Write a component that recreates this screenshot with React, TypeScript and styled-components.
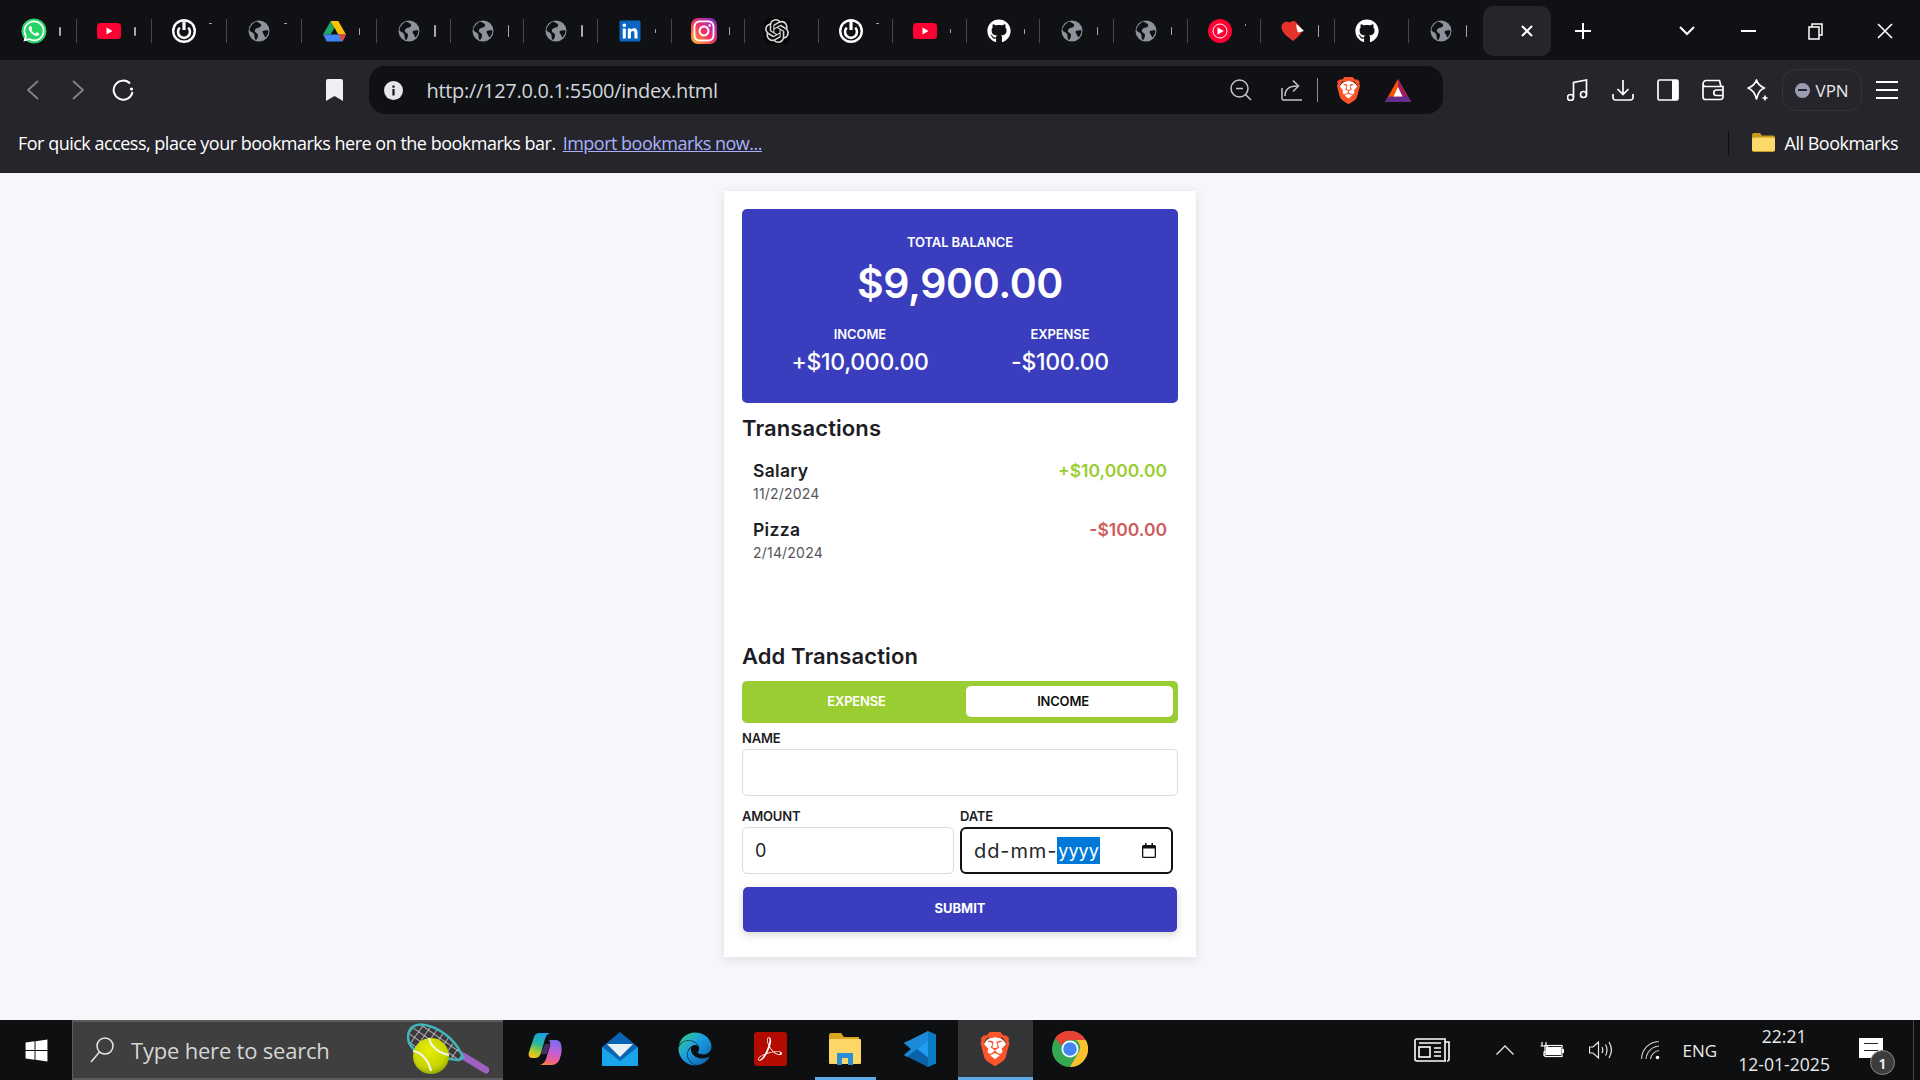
import { FC, ReactNode } from "react";
import styled, { createGlobalStyle } from "styled-components";
import { FaEdge, FaGithub, FaInstagram, FaLinkedin, FaWhatsapp, FaWindows } from "react-icons/fa";
import { SiBrave, SiOpenai, SiAdobeacrobatreader } from "react-icons/si";

const UI_FONT = `"Open Sans", "Noto Sans", sans-serif`;
const APP_FONT = `Inter, "Open Sans", sans-serif`;

const GlobalStyle = createGlobalStyle`
  html, body { margin: 0; padding: 0; }
  body { font-family: ${APP_FONT}; overflow: hidden; }
  * { box-sizing: border-box; }
`;

/* ---------- drawn icons ---------- */

const PowerIcon = () => (
  <svg width="24" height="24" viewBox="0 0 24 24">
    <circle cx="12" cy="12" r="12" fill="#fff" />
    <circle cx="12" cy="12" r="9.6" fill="#101114" />
    <path d="M7.8 8.6a6 6 0 1 0 8.4 0" fill="none" stroke="#fff" strokeWidth="2.6" />
    <path d="M12 2v9" stroke="#fff" strokeWidth="3.2" />
  </svg>
);

const GlobeIcon = () => (
  <svg width="22" height="22" viewBox="0 0 22 22">
    <circle cx="11" cy="11" r="10.5" fill="#8e929a" />
    <path
      d="M8 1.500c3 1.500 6 2 5 4.500s-5 1-6 4 3 2.500 3 5-1 4-2 5c-2-1-1-4-2-6S2 12 1.500 10 5 3 8 1.500zM15 11c2-1 4-1 5.500-.5 0 2-1 5-3 7-1-1-1-2-2-3.500s-1.500-2.500-.5-3z"
      fill="#101114"
    />
  </svg>
);

const YoutubeIcon = () => (
  <svg width="24" height="16" viewBox="0 0 24 16">
    <rect width="24" height="16" rx="3.500" fill="#ff0033" />
    <path d="M9.500 4.500 15.500 8l-6 3.500z" fill="#fff" />
  </svg>
);

const DriveIcon = () => (
  <svg width="23" height="21" viewBox="0 0 23 21">
    <path d="M7.700 0h7.600l-7.600 13.500H0z" fill="#1fa463" />
    <path d="M7.700 0h7.600L23 13.500h-7.700z" fill="#ffc107" />
    <path d="M0 13.500h23L19.500 20.500H3.800z" fill="#4285f4" />
    <path d="M15.300 13.500H23L19.500 20.500z" fill="#ea4335" />
  </svg>
);

const YtMusicIcon = () => (
  <svg width="24" height="24" viewBox="0 0 24 24">
    <circle cx="12" cy="12" r="12" fill="#ff0033" />
    <circle cx="12" cy="12" r="7" fill="none" stroke="#fff" strokeWidth="1" />
    <path d="M9.500 8.200 15.800 12l-6.300 3.800z" fill="#fff" />
  </svg>
);

const HeartNoteIcon = () => (
  <svg width="24" height="22" viewBox="0 0 24 22">
    <path d="M12 21C6 16.500 0 12 .5 6.500 1 2 6 .5 8.500 2.500 10 1 13 0 15 2l7 8c-2.500 5-6 8-10 11z" fill="#e5322d" />
    <path d="M15.500 4l7.500 7-6 1.500c-1-2.500-2-6-1.500-8.500z" fill="#fff" />
  </svg>
);

const BatIcon = () => (
  <svg width="26" height="23" viewBox="0 0 26 23">
    <path d="M13 0 26 23H0z" fill="#ff5000" />
    <path d="M13 0 26 23H18.500L13 8z" fill="#9e1f63" />
    <path d="M0 23l3.500-5.500h19L26 23z" fill="#662d91" />
    <path d="M13 8l4.500 9.500h-9z" fill="#fff" />
  </svg>
);

const LineSvg = styled.svg`
  width: 22px;
  height: 22px;
  stroke: #fff;
  stroke-width: 1.7;
`;

const GraySvg = styled.svg`
  width: 22px;
  height: 22px;
  stroke: #c4c6cb;
  stroke-width: 1.5;
`;

const MusicIcon = () => (
  <LineSvg viewBox="0 0 22 22" fill="none">
    <circle cx="3.500" cy="18.500" r="3" />
    <circle cx="16.500" cy="15.500" r="3" />
    <path d="M6.500 18V3.500L19.500 1v14.500" />
  </LineSvg>
);

const DownloadIcon = () => (
  <LineSvg viewBox="0 0 22 22" fill="none">
    <path d="M11 1v14M5.500 10l5.500 5.500L16.500 10M1 15v3.500a2.500 2.500 0 0 0 2.500 2.500h15a2.500 2.500 0 0 0 2.500-2.500V15" />
  </LineSvg>
);

const SidebarIcon = () => (
  <LineSvg viewBox="0 0 22 22" fill="none">
    <rect x="1" y="1" width="20" height="20" rx="1.500" />
    <rect x="15" y="1" width="6" height="20" fill="#fff" stroke="none" />
  </LineSvg>
);

const WalletIcon = () => (
  <LineSvg viewBox="0 0 22 22" fill="none">
    <path d="M1 5.500V18a2.500 2.500 0 0 0 2.500 2.500h15A2.500 2.500 0 0 0 21 18V7.500H3.500C2 7.500 1 6.500 1 5c0-2 1.500-3.500 3-3.500h13.500L19 7.500" />
    <path d="M21 11h-6.500a2.500 2.500 0 0 0 0 5.500H21" />
  </LineSvg>
);

const LeoIcon = () => (
  <LineSvg viewBox="0 0 22 22" fill="none">
    <path d="M9.500 1c1 4 3 6 8 8-4 1.500-6 3.500-8 11-1.500-6-3.500-9-8.500-11 5-1.500 7-4 8.500-8z" strokeLinejoin="round" />
    <path d="M18 15.500l1 2.500 2.500 1-2.500 1-1 2.500-1-2.500-2.500-1 2.500-1z" fill="#fff" stroke="none" />
  </LineSvg>
);

const ZoomOutIcon = () => (
  <GraySvg viewBox="0 0 22 22" fill="none">
    <circle cx="9.500" cy="9.500" r="8.500" />
    <path d="M15.500 15.500 21 21M6 9.500h7" />
  </GraySvg>
);

const ShareIcon = () => (
  <GraySvg viewBox="0 0 22 22" fill="none">
    <path d="M1 9v10.500a1.500 1.500 0 0 0 1.500 1.500H21M4 17c0-7 4-10 12-10M12 1.500 17.500 7 12 12.500" />
  </GraySvg>
);

const ReloadIcon = () => (
  <svg width="22" height="22" viewBox="0 0 22 22" fill="none" stroke="#fff" strokeWidth="2">
    <path d="M18 4.500A9.500 9.500 0 1 0 20.500 13" />
    <circle cx="19.500" cy="10" r="1.600" fill="#fff" stroke="none" />
  </svg>
);

const BackIcon: FC<{ $flip?: boolean }> = ({ $flip }) => (
  <svg width="12" height="20" viewBox="0 0 12 20" fill="none" stroke="#85858c" strokeWidth="1.800">
    <path d={$flip ? "M1 1l10 9-10 9" : "M11 1 1 10l10 9"} />
  </svg>
);

const BookmarkIcon = () => (
  <svg width="17" height="22" viewBox="0 0 17 22">
    <path d="M2 0h13a2 2 0 0 1 2 2v20l-8.500-5L0 22V2a2 2 0 0 1 2-2z" fill="#eef0f4" />
  </svg>
);

const InfoIcon = () => (
  <svg width="19" height="19" viewBox="0 0 19 19">
    <circle cx="9.500" cy="9.500" r="9.500" fill="#e6e7ec" />
    <rect x="8.400" y="8" width="2.200" height="6.500" fill="#15161a" />
    <rect x="8.400" y="4.500" width="2.200" height="2.200" fill="#15161a" />
  </svg>
);

const FolderIcon = () => (
  <svg width="23" height="19" viewBox="0 0 23 19">
    <path d="M0 2a2 2 0 0 1 2-2h6l2 2.500h11a2 2 0 0 1 2 2V17a2 2 0 0 1-2 2H2a2 2 0 0 1-2-2z" fill="#c99a1c" />
    <rect y="4.500" width="23" height="13.500" rx="1.500" fill="#fbd96a" />
  </svg>
);

const MenuIcon = () => (
  <svg width="22" height="18" viewBox="0 0 22 18" fill="#fff">
    <rect width="22" height="2" />
    <rect y="8" width="22" height="2" />
    <rect y="16" width="22" height="2" />
  </svg>
);

const CalendarIcon = () => (
  <svg width="14" height="15" viewBox="0 0 14 15">
    <path
      fillRule="evenodd"
      d="M3 0h1.500v2h5V0H11v2h1.500A1.500 1.500 0 0 1 14 3.500v10a1.500 1.500 0 0 1-1.500 1.500h-11A1.500 1.500 0 0 1 0 13.500v-10A1.500 1.500 0 0 1 1.500 2H3zM1.300 5.500v8.200h11.400V5.500z"
      fill="#111"
    />
  </svg>
);

const RacketIcon = () => (
  <svg width="82" height="54" viewBox="0 0 82 54">
    <defs>
      <radialGradient id="ball" cx="45%" cy="35%" r="70%">
        <stop offset="0%" stopColor="#e8f000" />
        <stop offset="70%" stopColor="#c4d200" />
        <stop offset="100%" stopColor="#8a9a00" />
      </radialGradient>
      <pattern id="strings" width="7" height="7" patternUnits="userSpaceOnUse" patternTransform="rotate(35)">
        <rect width="7" height="7" fill="#3a3a3c" />
        <path d="M0 0h7M0 0v7" stroke="#d8d0d4" strokeWidth="1.500" />
      </pattern>
    </defs>
    <path d="M56 33 79 47" stroke="#a060c0" strokeWidth="7" strokeLinecap="round" />
    <path d="M42 22 57 35" stroke="#3fb4bc" strokeWidth="3" />
    <path d="M18 2C8 0 1 5 1 14s8 16 20 19l30 4c4 0 5-3 3-7C46 14 30 4 18 2z" fill="url(#strings)" stroke="#3fb4bc" strokeWidth="2.500" />
    <circle cx="24" cy="33" r="18" fill="url(#ball)" />
    <path d="M6 28c8 1 15 8 18 20M22 15c2 9 10 15 20 17" fill="none" stroke="#f4f4f0" strokeWidth="2.200" />
  </svg>
);

const CopilotIcon = () => (
  <svg width="34" height="32" viewBox="0 0 34 32">
    <defs>
      <linearGradient id="cop1" x1="0.6" y1="0" x2="0.3" y2="1">
        <stop offset="0%" stopColor="#1a9fe8" />
        <stop offset="45%" stopColor="#27b89a" />
        <stop offset="75%" stopColor="#a8cc30" />
        <stop offset="100%" stopColor="#f5c020" />
      </linearGradient>
      <linearGradient id="cop2" x1="0.6" y1="0" x2="0.4" y2="1">
        <stop offset="0%" stopColor="#7a6cf0" />
        <stop offset="50%" stopColor="#c85fd0" />
        <stop offset="85%" stopColor="#f0608a" />
        <stop offset="100%" stopColor="#f78040" />
      </linearGradient>
    </defs>
    <path d="M11 0h11c-3 1-4 3-5 6l-4 14c-1 3-3 5-6 5H4c-3 0-4-3-3-6L6 4c1-3 3-4 5-4z" fill="url(#cop1)" />
    <path d="M21 7h7c2 0 4 1 5 4 1 4 1 9-1 14-1 4-4 7-8 7H12c3-1 5-3 6-6l4-13c.5-2 0-5-1-6z" fill="url(#cop2)" />
    <path d="M17 11h5l-3 10h-6z" fill="#7a4fc0" opacity="0.5" />
  </svg>
);

const MailIcon = () => (
  <svg width="36" height="34" viewBox="0 0 36 34">
    <path d="M18 0 36 15v19H0V15z" fill="#0a64b4" />
    <path d="M5 12h26L18 25z" fill="#e8f0f6" />
    <path d="M0 15l18 14 18-14v19H0z" fill="#1aa5ea" />
  </svg>
);

const ExplorerIcon = () => (
  <svg width="32" height="32" viewBox="0 0 32 32">
    <path d="M0 2a2 2 0 0 1 2-2h10l3 4h15v6H0z" fill="#dba520" />
    <rect y="6" width="32" height="25" rx="1" fill="#fcd768" />
    <path d="M8 32V20h16v12h-5v-7h-6v7z" fill="#2a8fd8" />
  </svg>
);

const VsCodeIcon = () => (
  <svg width="32" height="36" viewBox="0 0 32 36">
    <path d="M24 0l8 3.500v29L24 36 8 21l8-6z" fill="#0a7cc6" />
    <path d="M24 0v36l-16-15 4-3z" fill="#1f9cf0" />
    <path d="M0 12l3-2 21 16.500V36L0 24l7-6z" fill="#0a63a8" />
    <path d="M0 24l3 2L24 9.500V0L0 12l7 6z" fill="#1a8ad8" />
  </svg>
);

const ChromeIcon = () => (
  <svg width="36" height="36" viewBox="0 0 36 36">
    <circle cx="18" cy="18" r="18" fill="#34a853" />
    <path d="M18 0a18 18 0 0 1 15.600 9H18a9 9 0 0 0-8.400 5.800L3 7A18 18 0 0 1 18 0z" fill="#ea4335" />
    <path d="M33.600 9A18 18 0 0 1 18 36l7.800-13.500A9 9 0 0 0 24 9z" fill="#fbc02d" />
    <circle cx="18" cy="18" r="8.500" fill="#fff" />
    <circle cx="18" cy="18" r="6.800" fill="#4285f4" />
  </svg>
);

const NewsIcon = () => (
  <svg width="36" height="24" viewBox="0 0 36 24" fill="none" stroke="#fff" strokeWidth="1.600">
    <path d="M3 1h28v21a1 1 0 0 0 1 1H3a2 2 0 0 1-2-2V3a2 2 0 0 1 2-2zM31 4h4v17a2 2 0 0 1-2 2" />
    <rect x="5" y="9" width="11" height="10" />
    <path d="M5 5h22M20 10h7M20 14h7M20 18h7" />
  </svg>
);

const ChevronUpIcon = () => (
  <svg width="18" height="10" viewBox="0 0 18 10" fill="none" stroke="#e8e8e8" strokeWidth="1.300">
    <path d="M.500 9.500 9 1l8.500 8.500" />
  </svg>
);

const BatteryIcon = () => (
  <svg width="24" height="16" viewBox="0 0 24 16" fill="none" stroke="#fff" strokeWidth="1.200">
    <path d="M2 0v4M6 0v4M.500 4h7v3c0 2-2 3-3.500 3v4" />
    <rect x="5" y="3.500" width="17" height="11" />
    <rect x="6" y="5" width="15" height="8" fill="#fff" stroke="none" />
    <rect x="22" y="7" width="2" height="4" fill="#fff" stroke="none" />
  </svg>
);

const VolumeIcon = () => (
  <svg width="23" height="18" viewBox="0 0 23 18" fill="none" stroke="#e8e8e8" strokeWidth="1.200">
    <path d="M.500 6h3.500L9.500 1v16L4 12H.500zM13 6c1 2 1 4 0 6M16.500 3.500c2 3 2 8 0 11M20 1c3 5 3 11 0 16" />
  </svg>
);

const WifiIcon = () => (
  <svg width="19" height="19" viewBox="0 0 19 19" fill="none" stroke="#c8c8c8" strokeWidth="1.100">
    <path d="M.500 18C1 8 8 1 18 .500M5 18C5.500 11 11 5.500 18 5M9.500 18c.5-4 4-8 8.500-8.500" />
    <circle cx="16.500" cy="16.500" r="1.800" fill="#fff" stroke="none" />
  </svg>
);

/* ---------- browser chrome ---------- */

const Screen = styled.div`
  width: 1920px;
  height: 1080px;
  display: flex;
  flex-direction: column;
  overflow: hidden;
  background: #f5f7fa;
`;

const TabStrip = styled.div`
  height: 60px;
  background: #101114;
  display: flex;
  padding: 6px 0 0 2px;
  flex-shrink: 0;
  font-family: ${UI_FONT};
`;

const Tab = styled.div`
  width: 73.7px;
  height: 50px;
  padding-left: 19px;
  display: flex;
  align-items: center;
  flex-shrink: 0;

  &:nth-child(-n + 5) {
    width: 75px;
  }

  &::after {
    content: "";
    width: 1px;
    height: 24px;
    margin-left: auto;
    background: #47484d;
  }

  &:nth-child(20)::after {
    background: none;
  }
`;

const FavSlot = styled.span<{ $bg?: string; $radius?: number; $color?: string }>`
  width: 26px;
  height: 26px;
  flex-shrink: 0;
  display: flex;
  align-items: center;
  justify-content: center;
  background: ${(p) => p.$bg || "none"};
  border-radius: ${(p) => p.$radius || 0}px;
  color: ${(p) => p.$color || "#fff"};
  font-size: 24px;
`;

const FavBox = styled.span`
  width: 26px;
  flex-shrink: 0;
  display: flex;
  justify-content: center;
`;

const TitleFade = styled.span<{ $h: number; $w?: number; $up?: number }>`
  width: ${(p) => p.$w || 2}px;
  height: ${(p) => p.$h}px;
  margin-left: 12px;
  margin-bottom: ${(p) => p.$up || 0}px;
  background: #a8a9ad;
  border-radius: 1px;
`;

const ActiveTab = styled.div`
  width: 68px;
  height: 50px;
  margin-left: 1px;
  border-radius: 10px;
  background: #25252b;
  display: flex;
  align-items: center;
  justify-content: flex-end;
  padding-right: 17px;
  flex-shrink: 0;
`;

const StripButton = styled.span<{ $ml: number }>`
  margin-left: ${(p) => p.$ml}px;
  height: 50px;
  display: flex;
  align-items: center;
  flex-shrink: 0;
`;

const Toolbar = styled.div`
  height: 60px;
  background: #25252b;
  display: flex;
  align-items: center;
  padding: 0 0 0 10.5px;
  flex-shrink: 0;
  font-family: ${UI_FONT};
`;

const ToolSlot = styled.span<{ $ml?: number }>`
  width: 45px;
  height: 44px;
  margin-left: ${(p) => p.$ml || 0}px;
  display: flex;
  align-items: center;
  justify-content: center;
  flex-shrink: 0;
`;

const AddressBar = styled.div`
  width: 1074px;
  height: 48px;
  margin-left: 12px;
  background: #101114;
  border-radius: 16px;
  display: flex;
  align-items: center;
  padding: 0 32px 0 15px;
  flex-shrink: 0;
`;

const UrlText = styled.span`
  margin-left: 24px;
  font-size: 20px;
  letter-spacing: -0.3px;
  color: #d3d6dc;
`;

const AddressIcon = styled.span<{ $ml?: number; $auto?: boolean }>`
  margin-left: ${(p) => (p.$auto ? "auto" : `${p.$ml || 0}px`)};
  display: flex;
  align-items: center;
`;

const AddressDivider = styled.span`
  width: 1px;
  height: 24px;
  margin-left: 14px;
  background: #8a8b90;
`;

const BraveMark = styled.span<{ $size: number }>`
  display: flex;
  color: #fb542b;
  font-size: ${(p) => p.$size}px;
  background: radial-gradient(circle, #fff 0 48%, transparent 52%);
`;

const VpnPill = styled.div`
  width: 80px;
  height: 42px;
  margin-left: 1.5px;
  border: 1px solid #33333a;
  border-radius: 14px;
  display: flex;
  align-items: center;
  padding-left: 12px;
  gap: 6px;
  color: #e8e8ec;
  font-size: 17px;
`;

const VpnDot = styled.span`
  width: 15px;
  height: 15px;
  border-radius: 50%;
  background: #9b9bb2;
  display: flex;
  align-items: center;
  justify-content: center;

  &::after {
    content: "";
    width: 9px;
    height: 2px;
    background: #25252b;
  }
`;

const BookmarksBar = styled.div`
  height: 53px;
  background: #25252b;
  display: flex;
  align-items: center;
  padding: 0 22px 8px 18px;
  color: #fff;
  font-family: ${UI_FONT};
  font-size: 18px;
  flex-shrink: 0;
`;

const BookmarkHint = styled.span`
  letter-spacing: -0.5px;
`;

const ImportLink = styled.a`
  margin-left: 7px;
  color: #a9b1ff;
  text-decoration: underline;
  letter-spacing: -0.5px;
`;

const AllBookmarks = styled.div`
  margin-left: auto;
  display: flex;
  align-items: center;
  gap: 10px;
  padding-left: 23px;
  border-left: 1px solid #0e0e10;
  height: 24px;
  letter-spacing: -0.5px;
`;

/* ---------- expense tracker ---------- */

const Page = styled.main`
  flex: 1;
  background: #f5f7fa;
  padding-top: 18px;
  display: flex;
  justify-content: center;
  align-items: flex-start;
  color: #1d1d26;
`;

const Card = styled.section`
  width: 472px;
  background: #fff;
  padding: 18px 18px 25px;
  box-shadow: 0 2px 10px rgba(0, 0, 0, 0.1);
`;

const BalanceCard = styled.div`
  height: 194px;
  background: #3a3dbd;
  border-radius: 5px;
  padding-top: 24px;
  color: #fff;
  text-align: center;
`;

const CapsLabel = styled.div`
  font-size: 13px;
  line-height: 18px;
  font-weight: 600;
  letter-spacing: -0.1px;
`;

const BalanceAmount = styled.div`
  margin-top: 4px;
  font-size: 41px;
  line-height: 56px;
  font-weight: 600;
  letter-spacing: -0.4px;
`;

const StatsRow = styled.div`
  margin-top: 14px;
  display: grid;
  grid-template-columns: 236px 164px;
`;

const StatValue = styled.div`
  margin-top: 2px;
  font-size: 23px;
  line-height: 34px;
  font-weight: 500;
  letter-spacing: -0.3px;
`;

const SectionTitle = styled.h3<{ $mt?: number }>`
  margin: ${(p) => p.$mt || 0}px 0 0;
  font-size: 22px;
  line-height: 32px;
  font-weight: 600;
  letter-spacing: 0.1px;
`;

const TransactionList = styled.div`
  height: 181px;
  margin-top: 15px;
  padding: 0 11px;
`;

const TransactionRow = styled.div`
  height: 59px;
  display: flex;
  justify-content: space-between;
`;

const TxName = styled.div`
  font-size: 17.5px;
  line-height: 24px;
  font-weight: 600;
  letter-spacing: 0.3px;
`;

const TxDate = styled.div`
  font-size: 14px;
  line-height: 22px;
  letter-spacing: 0.2px;
  color: #55555c;
`;

const TxAmount = styled.div<{ $kind: "income" | "expense" }>`
  font-size: 17.5px;
  line-height: 24px;
  font-weight: 600;
  color: ${(p) => (p.$kind === "income" ? "#9acd32" : "#cd5c5c")};
`;

const Toggle = styled.div`
  height: 42px;
  margin-top: 9px;
  padding: 5px 5px 6px;
  background: #9acd32;
  border-radius: 5px;
  display: grid;
  grid-template-columns: 219px 207px;
`;

const ToggleOption = styled.div<{ $active?: boolean }>`
  display: flex;
  align-items: center;
  justify-content: center;
  padding-bottom: 1px;
  font-size: 13px;
  font-weight: 600;
  letter-spacing: -0.2px;
  border-radius: 5px;
  color: ${(p) => (p.$active ? "#111" : "#fff")};
  background: ${(p) => (p.$active ? "#fff" : "transparent")};
  padding-right: ${(p) => (p.$active ? 13 : 0)}px;
`;

const FieldLabel = styled.label<{ $mt: number }>`
  display: block;
  margin-top: ${(p) => p.$mt}px;
  margin-bottom: 2px;
  font-size: 13px;
  line-height: 18px;
  font-weight: 600;
  letter-spacing: -0.2px;
`;

const TextInput = styled.input`
  display: block;
  width: 100%;
  height: 47px;
  border: 1px solid #dcdcdc;
  border-radius: 5px;
  padding: 0 12px;
  font-family: ${APP_FONT};
  font-size: 18px;
  color: #1d1d26;
  background: #fff;
  outline: none;
  appearance: textfield;
`;

const FieldGrid = styled.div`
  display: grid;
  grid-template-columns: 212px 213px;
  column-gap: 6px;
`;

const DateField = styled.div`
  height: 47px;
  border: 2px solid #111;
  border-radius: 6px;
  display: flex;
  align-items: center;
  padding: 0 15px 0 12px;
  font-size: 20px;
  letter-spacing: 0.9px;
  color: #26262c;
`;

const DateSelection = styled.span`
  background: #0078d7;
  color: #fff;
  font-size: 18px;
  line-height: 27px;
  padding: 0 1px;
  letter-spacing: 0;
`;

const DateIcon = styled.span`
  margin-left: auto;
  display: flex;
`;

const SubmitButton = styled.button`
  display: block;
  width: 434px;
  height: 45px;
  margin: 13px 1px 0;
  padding: 0 0 3px;
  border: 0;
  border-radius: 5px;
  background: #3a3dbd;
  color: #fff;
  font-family: ${APP_FONT};
  font-size: 13px;
  font-weight: 700;
  box-shadow: 0 3px 8px rgba(0, 0, 0, 0.16);
`;

/* ---------- taskbar ---------- */

const Taskbar = styled.footer`
  height: 60px;
  background: #0e0f10;
  display: flex;
  align-items: stretch;
  flex-shrink: 0;
  font-family: ${UI_FONT};
  color: #e8e8e8;
`;

const StartButton = styled.div`
  width: 72px;
  display: flex;
  align-items: center;
  justify-content: center;
  color: #fff;
  font-size: 25px;
`;

const SearchBox = styled.div`
  width: 431px;
  background: #3f3f3f;
  border-top: 2px solid #5b5b5b;
  border-bottom: 2px solid #5b5b5b;
  border-left: 1px solid #5b5b5b;
  display: flex;
  align-items: center;
  padding-left: 17px;
  font-size: 22px;
  color: #d6d6d6;
`;

const SearchGlass = styled.svg`
  width: 24px;
  height: 26px;
  margin-right: 17px;
`;

const SearchText = styled.span`
  letter-spacing: -0.2px;
`;

const RacketSlot = styled.span`
  margin-left: auto;
  margin-right: 14px;
  display: flex;
`;

const TaskIcons = styled.div`
  display: flex;
  margin-left: 4.5px;
`;

const TaskSlot = styled.div<{ $running?: boolean; $active?: boolean }>`
  width: 75px;
  display: flex;
  align-items: center;
  justify-content: center;
  background: ${(p) => (p.$active ? "#333436" : "transparent")};
  border-bottom: 3px solid ${(p) => (p.$active ? "#5ea9e8" : "transparent")};
  border-image: ${(p) =>
    p.$running && !p.$active
      ? "linear-gradient(90deg, transparent 8px, #5ea9e8 8px, #5ea9e8 67px, transparent 67px) 1"
      : "none"};
  font-size: 34px;
`;

const AcrobatTile = styled.span`
  width: 33px;
  height: 34px;
  border-radius: 3px;
  background: #b30b00;
  display: flex;
  align-items: center;
  justify-content: center;
  color: #fff;
  font-size: 24px;
`;

const Tray = styled.div`
  margin-left: auto;
  display: flex;
  align-items: center;
  padding-right: 7px;
  position: relative;

  &::after {
    content: "";
    position: absolute;
    right: 6px;
    top: 0;
    bottom: 0;
    width: 1px;
    background: #454545;
  }
`;

const TrayItem = styled.span<{ $ml: number }>`
  margin-left: ${(p) => p.$ml}px;
  display: flex;
  align-items: center;
`;

const TrayLang = styled.span`
  margin-left: 23px;
  font-size: 17px;
`;

const Clock = styled.div`
  margin-left: 21px;
  text-align: center;
  font-size: 17.6px;
  line-height: 28px;
`;

const NotifyWrap = styled.div`
  position: relative;
  width: 24px;
  height: 20px;
  margin: 0 30px 4px 29px;
  background: #fff;

  &::before {
    content: "";
    position: absolute;
    top: 5px;
    left: 5px;
    width: 14px;
    height: 6px;
    border-top: 1.5px solid #222;
    border-bottom: 1.5px solid #222;
  }
`;

const NotifyBadge = styled.span`
  position: absolute;
  left: 11px;
  top: 12px;
  width: 25px;
  height: 25px;
  border-radius: 50%;
  background: #3c3c3c;
  border: 1px solid #888;
  display: flex;
  align-items: center;
  justify-content: center;
  color: #fff;
  font-size: 15px;
  font-weight: 600;
`;

const GradientDefs = styled.svg`
  width: 0;
  height: 0;
  position: absolute;
`;

/* ---------- data ---------- */

const globe = (
  <FavBox>
    <GlobeIcon />
  </FavBox>
);
const power = (
  <FavBox>
    <PowerIcon />
  </FavBox>
);
const youtube = (
  <FavBox>
    <YoutubeIcon />
  </FavBox>
);
const github = (
  <FavSlot>
    <FaGithub />
  </FavSlot>
);

const TABS: { icon: ReactNode; h: number; w?: number; up?: number }[] = [
  {
    icon: (
      <FavSlot $bg="radial-gradient(circle, #25d366 0 66%, transparent 70%)" $radius={13}>
        <FaWhatsapp />
      </FavSlot>
    ),
    h: 9,
  },
  { icon: youtube, h: 9 },
  { icon: power, h: 1, w: 3, up: 16 },
  { icon: globe, h: 1, w: 3, up: 16 },
  {
    icon: (
      <FavBox>
        <DriveIcon />
      </FavBox>
    ),
    h: 7,
    w: 1,
  },
  { icon: globe, h: 12 },
  { icon: globe, h: 12, w: 1 },
  { icon: globe, h: 12 },
  {
    icon: (
      <FavSlot $bg="linear-gradient(#fff, #fff) center / 18px 18px no-repeat" $color="#0a66c2">
        <FaLinkedin />
      </FavSlot>
    ),
    h: 4,
    w: 1,
  },
  {
    icon: (
      <FavSlot $radius={7} $bg="linear-gradient(45deg, #fdb42d 5%, #f6365c 45%, #c32aa3 70%, #7232bd 100%)">
        <FaInstagram />
      </FavSlot>
    ),
    h: 8,
    w: 1,
  },
  {
    icon: (
      <FavSlot $radius={6} $bg="#050505" $color="#d8d8d8">
        <SiOpenai />
      </FavSlot>
    ),
    h: 0,
  },
  { icon: power, h: 1, w: 3, up: 16 },
  { icon: youtube, h: 4, w: 1 },
  { icon: github, h: 5, w: 1 },
  { icon: globe, h: 8, w: 1 },
  { icon: globe, h: 8, w: 1 },
  {
    icon: (
      <FavBox>
        <YtMusicIcon />
      </FavBox>
    ),
    h: 2,
    w: 1,
    up: 12,
  },
  {
    icon: (
      <FavBox>
        <HeartNoteIcon />
      </FavBox>
    ),
    h: 12,
    w: 1,
  },
  { icon: github, h: 0 },
  { icon: globe, h: 12, w: 1 },
];

const TASK_APPS: { icon: ReactNode; running?: boolean; active?: boolean }[] = [
  { icon: <CopilotIcon /> },
  { icon: <MailIcon /> },
  { icon: <FaEdge fill="url(#edgeGrad)" /> },
  {
    icon: (
      <AcrobatTile>
        <SiAdobeacrobatreader />
      </AcrobatTile>
    ),
  },
  { icon: <ExplorerIcon />, running: true },
  { icon: <VsCodeIcon /> },
  {
    icon: (
      <BraveMark $size={34}>
        <SiBrave />
      </BraveMark>
    ),
    active: true,
  },
  { icon: <ChromeIcon /> },
];

export default function App() {
  return (
    <Screen>
      <GlobalStyle />
      <GradientDefs>
        <defs>
          <linearGradient id="edgeGrad" x1="0" y1="0" x2="1" y2="1">
            <stop offset="0%" stopColor="#36d07c" />
            <stop offset="45%" stopColor="#1b9de2" />
            <stop offset="100%" stopColor="#0c59a4" />
          </linearGradient>
        </defs>
      </GradientDefs>

      <TabStrip>
        {TABS.map((t, i) => (
          <Tab key={i}>
            {t.icon}
            {t.h > 0 && <TitleFade $h={t.h} $w={t.w} $up={t.up} />}
          </Tab>
        ))}
        <ActiveTab>
          <svg width="14" height="14" viewBox="0 0 14 14" stroke="#fff" strokeWidth="2">
            <path d="M2 2l10 10M12 2 2 12" />
          </svg>
        </ActiveTab>
        <StripButton $ml={24}>
          <svg width="16" height="16" viewBox="0 0 16 16" stroke="#fff" strokeWidth="2">
            <path d="M8 0v16M0 8h16" />
          </svg>
        </StripButton>
        <StripButton $ml={88}>
          <svg width="16" height="10" viewBox="0 0 16 10" fill="none" stroke="#fff" strokeWidth="2">
            <path d="M1 1l7 7 7-7" />
          </svg>
        </StripButton>
        <StripButton $ml={46}>
          <svg width="15" height="2" viewBox="0 0 15 2" fill="#fff">
            <rect width="15" height="2" />
          </svg>
        </StripButton>
        <StripButton $ml={52}>
          <svg width="15" height="17" viewBox="0 0 15 17" fill="none" stroke="#fff" strokeWidth="1.500">
            <rect x="1" y="4" width="10" height="12" />
            <path d="M4 4V1h10v11h-3" />
          </svg>
        </StripButton>
        <StripButton $ml={54}>
          <svg width="16" height="16" viewBox="0 0 16 16" stroke="#fff" strokeWidth="1.600">
            <path d="M1 1l14 14M15 1 1 15" />
          </svg>
        </StripButton>
      </TabStrip>

      <Toolbar>
        <ToolSlot>
          <BackIcon />
        </ToolSlot>
        <ToolSlot>
          <BackIcon $flip />
        </ToolSlot>
        <ToolSlot>
          <ReloadIcon />
        </ToolSlot>
        <ToolSlot $ml={166}>
          <BookmarkIcon />
        </ToolSlot>
        <AddressBar>
          <InfoIcon />
          <UrlText>http://127.0.0.1:5500/index.html</UrlText>
          <AddressIcon $auto>
            <ZoomOutIcon />
          </AddressIcon>
          <AddressIcon $ml={29}>
            <ShareIcon />
          </AddressIcon>
          <AddressDivider />
          <AddressIcon $ml={17}>
            <BraveMark $size={27}>
              <SiBrave />
            </BraveMark>
          </AddressIcon>
          <AddressIcon $ml={23}>
            <BatIcon />
          </AddressIcon>
        </AddressBar>
        <ToolSlot $ml={112.5}>
          <MusicIcon />
        </ToolSlot>
        <ToolSlot>
          <DownloadIcon />
        </ToolSlot>
        <ToolSlot>
          <SidebarIcon />
        </ToolSlot>
        <ToolSlot>
          <WalletIcon />
        </ToolSlot>
        <ToolSlot>
          <LeoIcon />
        </ToolSlot>
        <VpnPill>
          <VpnDot />
          VPN
        </VpnPill>
        <ToolSlot $ml={3}>
          <MenuIcon />
        </ToolSlot>
      </Toolbar>

      <BookmarksBar>
        <BookmarkHint>For quick access, place your bookmarks here on the bookmarks bar.</BookmarkHint>
        <ImportLink>Import bookmarks now...</ImportLink>
        <AllBookmarks>
          <FolderIcon />
          All Bookmarks
        </AllBookmarks>
      </BookmarksBar>

      <Page>
        <Card>
          <BalanceCard>
            <CapsLabel>TOTAL BALANCE</CapsLabel>
            <BalanceAmount>$9,900.00</BalanceAmount>
            <StatsRow>
              <div>
                <CapsLabel>INCOME</CapsLabel>
                <StatValue>+$10,000.00</StatValue>
              </div>
              <div>
                <CapsLabel>EXPENSE</CapsLabel>
                <StatValue>-$100.00</StatValue>
              </div>
            </StatsRow>
          </BalanceCard>

          <SectionTitle $mt={9}>Transactions</SectionTitle>
          <TransactionList>
            <TransactionRow>
              <div>
                <TxName>Salary</TxName>
                <TxDate>11/2/2024</TxDate>
              </div>
              <TxAmount $kind="income">+$10,000.00</TxAmount>
            </TransactionRow>
            <TransactionRow>
              <div>
                <TxName>Pizza</TxName>
                <TxDate>2/14/2024</TxDate>
              </div>
              <TxAmount $kind="expense">-$100.00</TxAmount>
            </TransactionRow>
          </TransactionList>

          <SectionTitle>Add Transaction</SectionTitle>
          <Toggle>
            <ToggleOption>EXPENSE</ToggleOption>
            <ToggleOption $active>INCOME</ToggleOption>
          </Toggle>

          <FieldLabel $mt={6}>NAME</FieldLabel>
          <TextInput type="text" />

          <FieldGrid>
            <div>
              <FieldLabel $mt={11}>AMOUNT</FieldLabel>
              <TextInput type="number" defaultValue={0} />
            </div>
            <div>
              <FieldLabel $mt={11}>DATE</FieldLabel>
              <DateField>
                dd-mm-<DateSelection>yyyy</DateSelection>
                <DateIcon>
                  <CalendarIcon />
                </DateIcon>
              </DateField>
            </div>
          </FieldGrid>

          <SubmitButton>SUBMIT</SubmitButton>
        </Card>
      </Page>

      <Taskbar>
        <StartButton>
          <FaWindows />
        </StartButton>
        <SearchBox>
          <SearchGlass viewBox="0 0 24 26" fill="none" stroke="#e8e8e8" strokeWidth="1.500">
            <circle cx="15" cy="9" r="8" />
            <path d="M9.500 15 1 25" />
          </SearchGlass>
          <SearchText>Type here to search</SearchText>
          <RacketSlot>
            <RacketIcon />
          </RacketSlot>
        </SearchBox>
        <TaskIcons>
          {TASK_APPS.map((a, i) => (
            <TaskSlot key={i} $running={a.running} $active={a.active}>
              {a.icon}
            </TaskSlot>
          ))}
        </TaskIcons>
        <Tray>
          <TrayItem $ml={0}>
            <NewsIcon />
          </TrayItem>
          <TrayItem $ml={46}>
            <ChevronUpIcon />
          </TrayItem>
          <TrayItem $ml={26}>
            <BatteryIcon />
          </TrayItem>
          <TrayItem $ml={25}>
            <VolumeIcon />
          </TrayItem>
          <TrayItem $ml={29}>
            <WifiIcon />
          </TrayItem>
          <TrayLang>ENG</TrayLang>
          <Clock>
            22:21
            <br />
            12-01-2025
          </Clock>
          <NotifyWrap>
            <NotifyBadge>1</NotifyBadge>
          </NotifyWrap>
        </Tray>
      </Taskbar>
    </Screen>
  );
}
